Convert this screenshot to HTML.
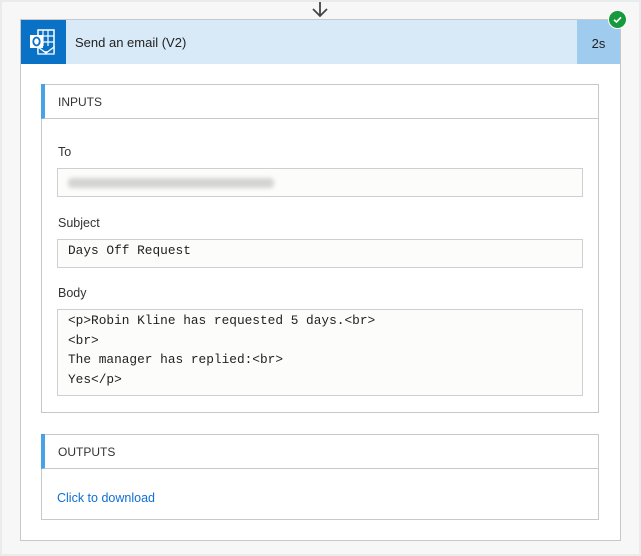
<!DOCTYPE html>
<html><head><style>
*{box-sizing:border-box;margin:0;padding:0}
body{width:641px;height:556px;background:#e9ebed;font-family:"Segoe UI","Liberation Sans",sans-serif;position:relative;overflow:hidden}
.bg{position:absolute;left:2px;top:2px;right:2px;bottom:2px;background:#f7f7f7}
.arrow{position:absolute;left:311px;top:1px}
.card{position:absolute;left:20px;top:19px;width:601px;height:522px;background:#fff;border:1px solid #c8c8c8}
.hdr{position:absolute;left:0;top:0;width:599px;height:44px;background:#d8e9f8}
.ico{position:absolute;left:0;top:0;width:45px;height:44px;background:#0a72c6}
.title{position:absolute;left:54px;top:15px;font-size:13px;color:#222}
.dur{position:absolute;right:0;top:0;width:43px;height:44px;background:#9fcbef;font-size:13px;color:#222;text-align:center;line-height:47px}
.chk{position:absolute;left:608px;top:10px;width:19px;height:19px;border-radius:50%;background:#169a3c;border:1px solid #fff}
.box{position:absolute;left:41px;width:558px;border:1px solid #c8c8c8;background:#fff}
.bh{height:35px;border-bottom:1px solid #c8c8c8;border-left:4px solid #4aa1e4;margin-left:-1px;margin-top:-1px;font-size:12px;color:#333;padding-left:13px;line-height:37px}
.lbl{position:absolute;left:16px;font-size:12.5px;color:#333}
.fld{position:absolute;left:15px;width:526px;border:1px solid #cfcfcf;background:#fcfcfa;font-family:"Liberation Mono",monospace;font-size:12.8px;color:#222;padding-left:10px}
</style></head><body>
<div class="bg"></div>
<svg class="arrow" width="18" height="17" viewBox="0 0 18 17"><path d="M9 1V15M2 8L9 15L16 8" stroke="#444" stroke-width="1.8" fill="none"/></svg>
<div class="card">
 <div class="hdr">
  <div class="ico"><svg width="45" height="44" viewBox="0 0 45 44">
   <rect x="17" y="10" width="16" height="22" fill="none" stroke="#fff" stroke-width="1.5"/>
   <path d="M17 16H33M17 22H33M22 10V26M27 10V26" stroke="#fff" stroke-width="1.2"/>
   <path d="M17 27L25 33L33 27V34H17Z" fill="#0a72c6" stroke="#fff" stroke-width="1.3"/>
   <rect x="9" y="15" width="13" height="13" fill="#fff"/>
   <ellipse cx="15.5" cy="21.5" rx="3.2" ry="4" fill="none" stroke="#0a72c6" stroke-width="1.8"/>
  </svg></div>
  <div class="title">Send an email (V2)</div>
  <div class="dur">2s</div>
 </div>
</div>
<div class="chk"><svg width="17" height="17" viewBox="0 0 17 17"><path d="M5 8.8L7.5 11L12 6.3" stroke="#fff" stroke-width="1.7" fill="none"/></svg></div>
<div class="box" style="top:84px;height:329px">
 <div class="bh">INPUTS</div>
 <div class="lbl" style="top:60px">To</div>
 <div class="fld" style="top:83px;height:29px"><div style="position:absolute;left:10px;top:9px;width:206px;height:10px;background:#d4d4d4;filter:blur(2px);border-radius:4px"></div></div>
 <div class="lbl" style="top:131px">Subject</div>
 <div class="fld" style="top:154px;height:29px;line-height:19px;padding-top:1px">Days Off Request</div>
 <div class="lbl" style="top:201px">Body</div>
 <div class="fld" style="top:224px;height:87px;line-height:19.5px;padding-top:1px">&lt;p&gt;Robin Kline has requested 5 days.&lt;br&gt;<br>&lt;br&gt;<br>The manager has replied:&lt;br&gt;<br>Yes&lt;/p&gt;</div>
</div>
<div class="box" style="top:434px;height:86px">
 <div class="bh">OUTPUTS</div>
 <div style="position:absolute;left:15px;top:56px;font-size:12.5px;color:#0f6fd6">Click to download</div>
</div>
</body></html>
